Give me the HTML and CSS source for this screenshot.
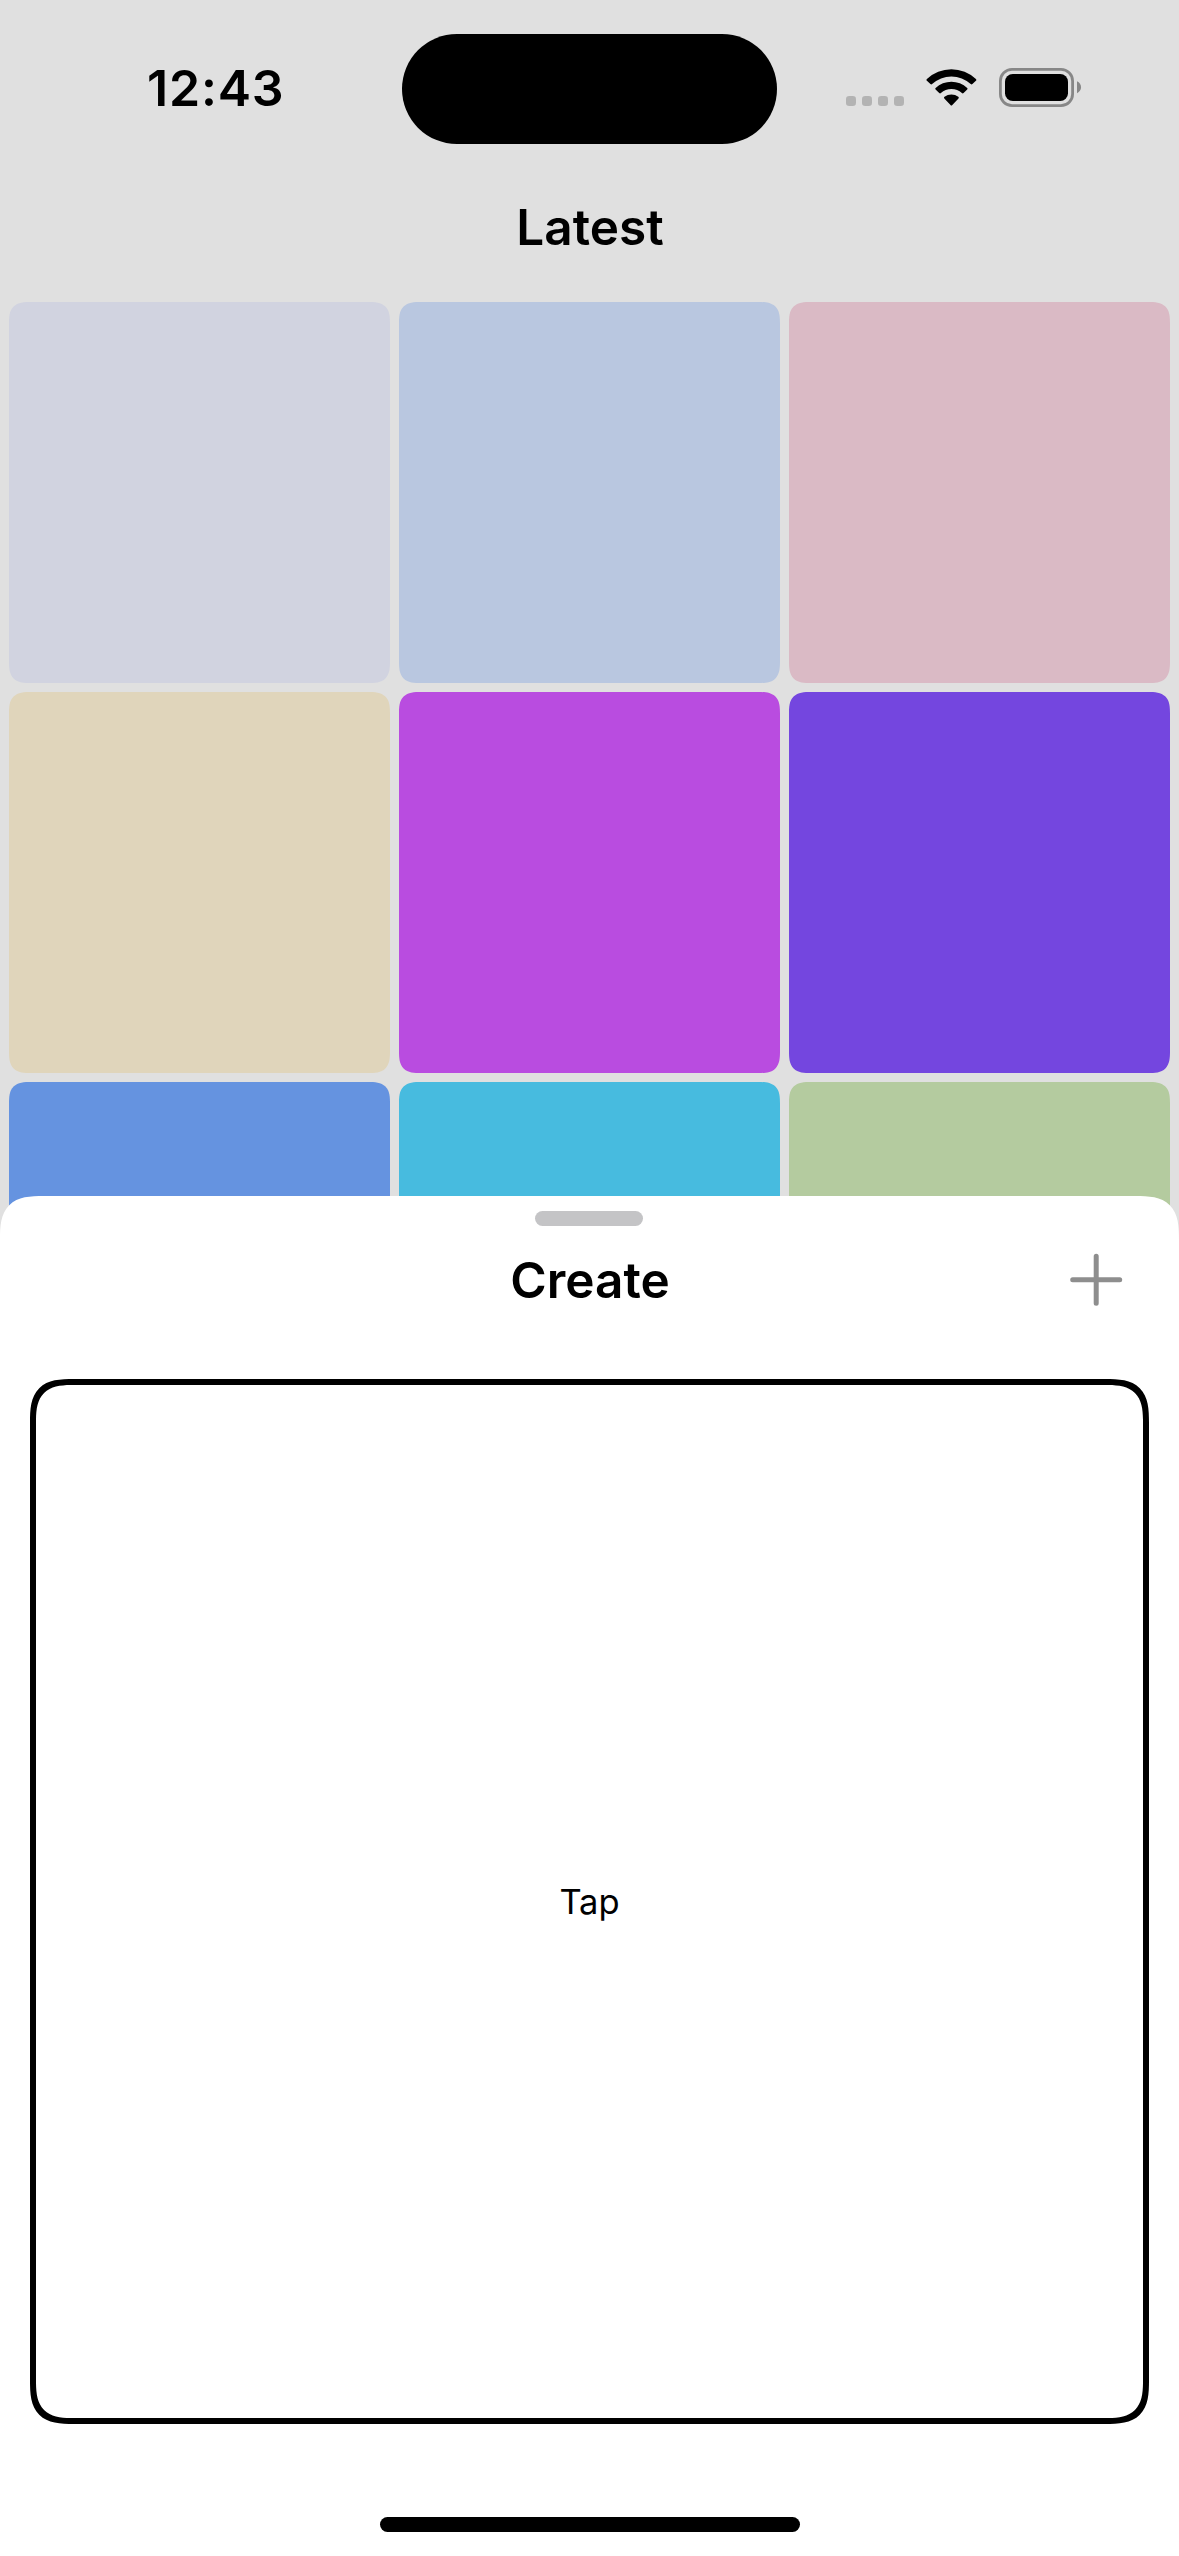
FILE: index.html
```html
<!DOCTYPE html>
<html lang="en">
<head>
<meta charset="utf-8">
<title>Latest</title>
<link rel="stylesheet" href="styles.css">
</head>
<body>
<div class="screen">
  <header class="status">
    <div class="time">12:43</div>
    <div class="island"></div>
    <svg class="indicators" width="240" height="50" viewBox="844 62 240 50" aria-hidden="true">
      <g fill="#b3b3b3">
        <rect x="846" y="96" width="10" height="10" rx="3.2"/>
        <rect x="862" y="96" width="10" height="10" rx="3.2"/>
        <rect x="878" y="96" width="10" height="10" rx="3.2"/>
        <rect x="894" y="96" width="10" height="10" rx="3.2"/>
      </g>
      <path d="M926.9 80.8Q926 80 926.9 79.1A35.5 35.5 0 0 1 975.9 79.1Q976.8 80 975.9 80.8L972.4 84.1Q971.5 84.8 970.7 84.1A28.3 28.3 0 0 0 932.1 84.1Q931.3 84.8 930.4 84.1Z"/>
      <path d="M935.6 89.5Q934.8 88.7 935.6 87.9A23.2 23.2 0 0 1 967.2 87.9Q968 88.7 967.2 89.5L963.6 93.1Q962.7 93.8 961.9 93.1A15.4 15.4 0 0 0 940.9 93.1Q940.1 93.8 939.2 93.1Z"/>
      <path d="M944.3 98.4Q943.5 97.5 944.5 96.8A11.5 11.5 0 0 1 958.3 96.8Q959.3 97.5 958.5 98.4L952.3 105Q951.4 106 950.5 105Z"/>
      <rect x="1000.4" y="69.4" width="72.2" height="36.2" rx="11.6" fill="none" stroke="#878787" stroke-width="2.8"/>
      <rect x="1005" y="74" width="63" height="27" rx="7.8"/>
      <path d="M1077 81.3C1082.4 83.7 1082.4 90.8 1077 93.2Z" fill="#878787"/>
    </svg>
  </header>
  <h1 class="title latest">Latest</h1>
  <main class="grid">
    <div class="tile lavender"></div>
    <div class="tile mist"></div>
    <div class="tile rose"></div>
    <div class="tile sand"></div>
    <div class="tile magenta"></div>
    <div class="tile violet"></div>
    <div class="tile blue"></div>
    <div class="tile cyan"></div>
    <div class="tile green"></div>
  </main>
  <section class="sheet">
    <div class="grabber"></div>
    <div class="sheet-head">
      <h2 class="title create">Create</h2>
      <svg class="plus" width="54" height="54" viewBox="0 0 54 54" role="img" aria-label="Add">
        <path d="M27.2 3.2V50.2M3.7 26.7H50.7" stroke="#8e8e8e" stroke-width="5" stroke-linecap="round"/>
      </svg>
    </div>
    <div class="canvas"><span class="tap">Tap</span></div>
    <div class="home"></div>
  </section>
</div>
</body>
</html>
```
FILE: styles.css
```css
* { box-sizing: border-box; }

body {
  margin: 0;
  font-family: Inter, "Liberation Sans", sans-serif;
  color: #000;
}

.screen {
  position: relative;
  width: 1179px;
  height: 2556px;
  overflow: hidden;
  background: #e0e0e0;
}

.status {
  display: grid;
  grid-template-columns: 402px 375px 1fr;
  height: 178px;
  padding-top: 34px;
}

.time {
  padding: 24px 0 0 147px;
  font-size: 50px;
  font-weight: 570;
  line-height: 60px;
  letter-spacing: 0.8px;
}

.island {
  height: 110px;
  border-radius: 55px;
  background: #000;
}

.indicators { margin: 28px 0 0 67px; }

.title {
  margin: 0;
  font-size: 49.5px;
  font-weight: 570;
  line-height: 60px;
  text-align: center;
}

.latest {
  height: 124px;
  padding: 19px 0 0 1px;
}

.grid {
  display: grid;
  grid-template-columns: repeat(3, 381px);
  grid-auto-rows: 381px;
  gap: 9px;
  padding: 0 9px;
}

.tile { border-radius: 16px; }
.lavender { background: #d1d3e0; }
.mist { background: #b9c7e0; }
.rose { background: #dabac5; }
.sand { background: #e0d5bb; }
.magenta { background: #b94ce0; }
.violet { background: #7446df; }
.blue { background: #6593e0; }
.cyan { background: #47bbdf; }
.green { background: #b4cb9f; }

/* Bottom sheet lies over the grid */
.sheet {
  position: absolute;
  left: 0;
  right: 0;
  bottom: 0;
  height: 1360px;
  padding: 15px 30px 0;
  border-radius: 32px 32px 0 0;
  background: #fff;
  display: flex;
  flex-direction: column;
}

.grabber {
  align-self: center;
  width: 108px;
  height: 15px;
  margin-right: 1px;
  border-radius: 8px;
  background: #c4c4c6;
}

.sheet-head {
  display: grid;
  grid-template-columns: 1fr 240px 1fr;
  height: 153px;
  padding-top: 24px;
}

.plus {
  justify-self: end;
  margin: 3px 26px 0 0;
}

.create {
  grid-column: 2;
  padding-left: 1px;
}

.canvas {
  display: flex;
  align-items: center;
  justify-content: center;
  height: 1045px;
  border: 6px solid #000;
  border-radius: 32px;
}

.tap {
  font-size: 34.5px;
  line-height: 42px;
}

.home {
  align-self: center;
  width: 420px;
  height: 15px;
  margin-top: 93px;
  border-radius: 8px;
  background: #000;
}

/* Continuous corners where the browser can draw them */
@supports (corner-shape: superellipse(1.6)) {
  .tile { border-radius: 22px; corner-shape: superellipse(1.56); }
  .sheet {
    border-radius: 44px 44px 0 0;
    corner-shape: superellipse(1.56);
  }
  .canvas { border-radius: 44px; corner-shape: superellipse(1.56); }
}
```
